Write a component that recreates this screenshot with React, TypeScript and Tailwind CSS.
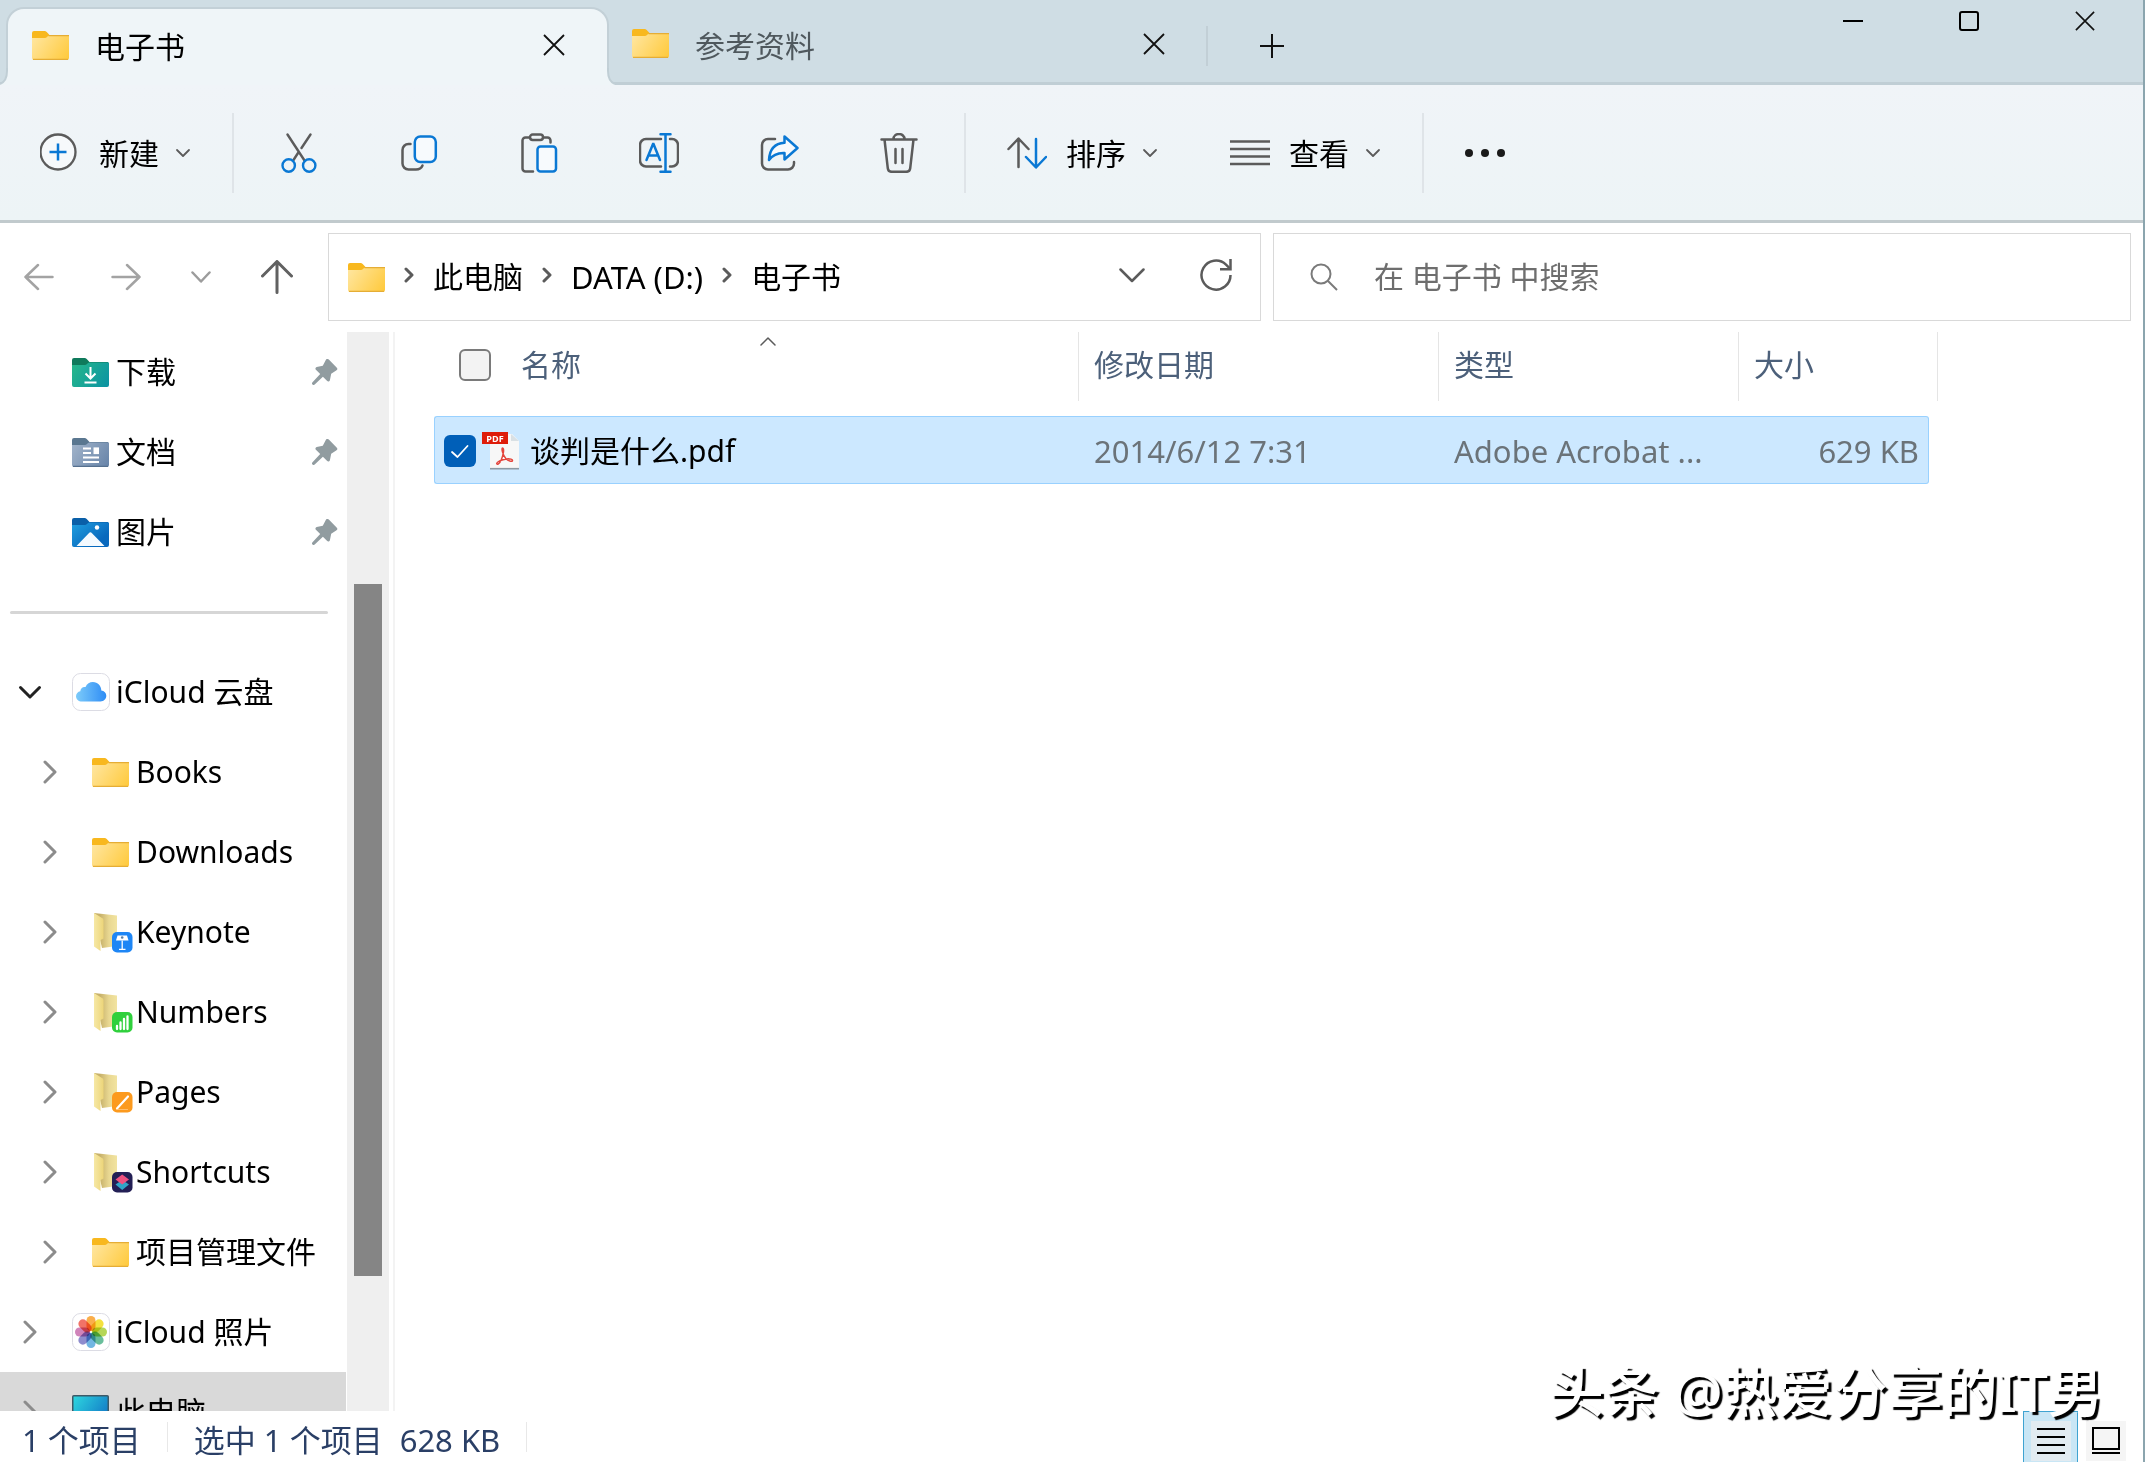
import React from 'react';

const GRAY = '#5b5b5b';
const BLUE = '#0a78d4';

function FolderIcon() {
  return (
    <svg className="w-[37px] h-[29px] shrink-0" viewBox="0 0 37 29" fill="none">
      <defs>
        <linearGradient id="folder" x1="0" y1="4" x2="37" y2="29" gradientUnits="userSpaceOnUse">
          <stop stopColor="#ffe7a3" />
          <stop offset="1" stopColor="#ffc93a" />
        </linearGradient>
      </defs>
      <path d="M0 2a2 2 0 0 1 2-2h10.500a3 3 0 0 1 2.200 1L17.500 4H36v4H0z" fill="#f8b81e" />
      <path d="M0 7h12c1.500 0 2.500-.5 3.500-1.500L17 4.500h20V27a2 2 0 0 1-2 2H2a2 2 0 0 1-2-2z" fill="url(#folder)" />
      <path d="M16.500 4.600H37M1 28.300h35" stroke="#e5ad35" strokeWidth="1.200" />
    </svg>
  );
}

function DownloadsIcon() {
  return (
    <svg className="w-[37px] h-[29px]" viewBox="0 0 37 29" fill="none">
      <defs>
        <linearGradient id="downloads" x1="0" y1="4" x2="37" y2="29" gradientUnits="userSpaceOnUse">
          <stop stopColor="#27b98a" />
          <stop offset="1" stopColor="#0b92a3" />
        </linearGradient>
      </defs>
      <path d="M0 2a2 2 0 0 1 2-2h10.500a3 3 0 0 1 2.200 1L17.500 4H36v4H0z" fill="#0f7a5c" />
      <path d="M0 7h12c1.500 0 2.500-.5 3.500-1.500L17 4.500h20V27a2 2 0 0 1-2 2H2a2 2 0 0 1-2-2z" fill="url(#downloads)" />
      <path d="M18.500 9v11M13.500 15.500l5 5 5-5M12.500 24.500h12" stroke="#fff" strokeWidth="2" />
    </svg>
  );
}

function DocumentsIcon() {
  return (
    <svg className="w-[37px] h-[29px]" viewBox="0 0 37 29" fill="none">
      <defs>
        <linearGradient id="documents" x1="0" y1="4" x2="37" y2="29" gradientUnits="userSpaceOnUse">
          <stop stopColor="#a3b5cb" />
          <stop offset="1" stopColor="#6683a8" />
        </linearGradient>
      </defs>
      <path d="M0 2a2 2 0 0 1 2-2h10.500a3 3 0 0 1 2.200 1L17.500 4H36v4H0z" fill="#5a7790" />
      <path d="M0 7h12c1.500 0 2.500-.5 3.500-1.500L17 4.500h20V27a2 2 0 0 1-2 2H2a2 2 0 0 1-2-2z" fill="url(#documents)" />
      <path d="M11 10.500h8M11 15h8M11 19.500h16M11 24h16" stroke="#fff" strokeWidth="2.200" />
      <path d="M21.500 9.400h5.500v6.700h-5.500z" fill="#fff" />
      <path d="M1 28.400h35" stroke="#55708f" strokeWidth="1.200" />
    </svg>
  );
}

function PicturesIcon() {
  return (
    <svg className="w-[37px] h-[29px]" viewBox="0 0 37 29" fill="none">
      <defs>
        <linearGradient id="pictures" x1="0" y1="4" x2="20" y2="29" gradientUnits="userSpaceOnUse">
          <stop stopColor="#20a0e0" />
          <stop offset="1" stopColor="#0868bd" />
        </linearGradient>
      </defs>
      <path d="M0 2a2 2 0 0 1 2-2h10.500a3 3 0 0 1 2.200 1L17.500 4H36v4H0z" fill="#0a5fa8" />
      <path d="M0 7h12c1.500 0 2.500-.5 3.500-1.500L17 4.500h20V27a2 2 0 0 1-2 2H2a2 2 0 0 1-2-2z" fill="url(#pictures)" />
      <path d="M4.500 28 16.800 15.200a2.200 2.200 0 0 1 3.200 0L32.500 28z" fill="#f4faff" />
      <circle cx="25" cy="9.500" r="2.200" fill="#fff" />
    </svg>
  );
}

function CloudIcon() {
  return (
    <svg className="w-[38px] h-[38px]" viewBox="0 0 38 38" fill="none">
      <defs>
        <linearGradient id="cloud" x1="4" y1="20" x2="34" y2="20" gradientUnits="userSpaceOnUse">
          <stop stopColor="#7ccbfa" />
          <stop offset="1" stopColor="#2f8df5" />
        </linearGradient>
      </defs>
      <rect x=".5" y=".5" width="37" height="37" rx="8" fill="#fff" stroke="#dcdce4" />
      <path d="M10 28.500c-3.500 0-6-2.300-6-5.300 0-2.700 1.900-4.600 4.300-5 .2-3 2.500-4.800 5.200-4.200C14.900 10.800 17.700 9 20.900 9c4.800 0 8.400 3.700 8.400 8.500 2.900.4 5 2.500 5 5.300 0 3.200-2.500 5.700-5.800 5.700z" fill="url(#cloud)" />
    </svg>
  );
}

const petals = ['#f9a02b', '#f2dc1c', '#a8cf3a', '#4fb38a', '#58a9dd', '#7a78c4', '#c86fae', '#ef5b4c'];

function PhotosIcon() {
  return (
    <svg className="w-[38px] h-[38px]" viewBox="0 0 38 38" fill="none">
      <rect x=".5" y=".5" width="37" height="37" rx="8" fill="#fff" stroke="#dcdce4" />
      {petals.map((color, i) => (
        <rect key={color} x="14.500" y="3" width="9" height="15" rx="4.500" fill={color} fillOpacity=".85"
          style={{ mixBlendMode: 'multiply' }} transform={`rotate(${i * 45} 19 19)`} />
      ))}
    </svg>
  );
}

function PcIcon() {
  return (
    <svg className="w-[37px] h-[34px]" viewBox="0 0 37 34" fill="none">
      <defs>
        <linearGradient id="pc" x1="0" y1="0" x2="37" y2="26" gradientUnits="userSpaceOnUse">
          <stop stopColor="#2fdbe0" />
          <stop offset="1" stopColor="#0f6fc4" />
        </linearGradient>
      </defs>
      <rect x=".75" y=".75" width="35.500" height="26" rx="1" fill="url(#pc)" stroke="#3d5a68" strokeWidth="1.500" />
      <path d="M14 27h9v4h4v2H10v-2h4z" fill="#8a979e" />
    </svg>
  );
}

function AppFolderIcon({ children }: { children: React.ReactNode }) {
  return (
    <svg className="w-[41px] h-[41px] shrink-0" viewBox="0 0 41 41" fill="none">
      <defs>
        <linearGradient id="flap" x1="0" y1="0" x2="12" y2="0" gradientUnits="userSpaceOnUse">
          <stop stopColor="#f8ecae" />
          <stop offset="1" stopColor="#ecd477" />
        </linearGradient>
        <linearGradient id="inside" x1="8" y1="0" x2="26" y2="0" gradientUnits="userSpaceOnUse">
          <stop stopColor="#c7b16a" />
          <stop offset=".5" stopColor="#e9d892" />
          <stop offset="1" stopColor="#f3e5a2" />
        </linearGradient>
      </defs>
      <path d="M2 1 25 3.500V34l-15 2z" fill="url(#inside)" />
      <path d="M2 1 10 6c1.300.8 1.500 1.500 1.500 3v17.500L8.500 28v11L2 34.500z" fill="url(#flap)" />
      {children}
    </svg>
  );
}

function KeynoteIcon() {
  return (
    <AppFolderIcon>
      <rect x="20" y="20" width="20.500" height="20.500" rx="5" fill="#1e86f5" />
      <path d="M25.500 23.500h9.500l1.500 5H24z" fill="#fff" />
      <circle cx="30.200" cy="25.500" r="1.300" fill="#5a7fa5" />
      <path d="M30.200 28.500v8.500M27 37.300h6.500" stroke="#fff" strokeWidth="1.300" />
    </AppFolderIcon>
  );
}

function NumbersIcon() {
  return (
    <AppFolderIcon>
      <rect x="20" y="20" width="20.500" height="20.500" rx="5" fill="#2fd03c" />
      <path d="M25 37v-3M28.500 37v-6.500M32 37V27M35.500 37V24.500" stroke="#fff" strokeWidth="2.300" strokeLinecap="round" />
    </AppFolderIcon>
  );
}

function PagesIcon() {
  return (
    <AppFolderIcon>
      <rect x="20" y="20" width="20.500" height="20.500" rx="5" fill="#fc9a1e" />
      <path d="m25 36.500 11-12" stroke="#fff" strokeWidth="2.200" strokeLinecap="round" />
      <path d="M24 37.500h12" stroke="#ffc77f" strokeWidth=".8" />
    </AppFolderIcon>
  );
}

function ShortcutsIcon() {
  return (
    <AppFolderIcon>
      <rect x="20" y="20" width="20.500" height="20.500" rx="5" fill="#231f55" />
      <path d="m23.500 32.500 6.700-4.500 6.800 4.500-6.800 5.500z" fill="#2fa6c8" />
      <path d="m23.500 27.500 6.700-5 6.800 5-6.800 5z" fill="#ee5180" />
    </AppFolderIcon>
  );
}

function PinIcon() {
  return (
    <svg className="w-[26px] h-[26px]" viewBox="0 0 26 26" fill="#919ca0">
      <path d="M13.800.9a2 2 0 0 1 3-.3l7.800 7.800a2 2 0 0 1-.4 3.100l-5 3.200-1.300 6.600a1.600 1.600 0 0 1-2.700.8l-4.300-4.300L2.700 25.500a1.500 1.500 0 0 1-2.200-2.200L8.200 15 3.900 10.800a1.600 1.600 0 0 1 .8-2.700l6.100-1.400z" />
    </svg>
  );
}

function PdfIcon() {
  return (
    <svg className="w-[37px] h-[38px] shrink-0" viewBox="0 0 37 38" fill="none">
      <path d="M8 2h22l7 7v28H8z" fill="#f7f7f7" />
      <path d="M29 2v7h8z" fill="#d9e0e4" />
      <path d="M8 36.700h29" stroke="#8c99a3" strokeWidth="1.600" />
      <path d="M0 0h26v12H0z" fill="#de1c0a" />
      <text x="13" y="9.500" textAnchor="middle" fontSize="9" fontWeight="700" fill="#fff" fontFamily="Open Sans, sans-serif">PDF</text>
      <path d="M20.500 16c2 0 1 7-1.500 12.500-1.500 3.300-4 4.500-4.300 3.200-.4-1.700 5-4.300 10-4.800 3.500-.3 6 .4 5.800 1.700-.3 1.700-4.300.4-6.700-2.200C20.500 22.800 19.300 16 20.500 16z" stroke="#e4453c" strokeWidth="1.500" />
    </svg>
  );
}

function Chevron({ className, d, viewBox, color = GRAY, width = 2.5 }: {
  className: string; d: string; viewBox: string; color?: string; width?: number;
}) {
  return (
    <svg className={className} viewBox={viewBox} fill="none" stroke={color} strokeWidth={width} strokeLinecap="round" strokeLinejoin="round">
      <path d={d} />
    </svg>
  );
}

const SmallDown = () => (
  <Chevron className="w-4 h-4" viewBox="0 0 16 16" d="m2 5 6 6 6-6" width={1.8} />
);

function CloseIcon({ className = 'w-[22px] h-[22px]' }: { className?: string }) {
  return (
    <svg className={className} viewBox="0 0 22 22" stroke="#111" strokeWidth="1.800">
      <path d="m1 1 20 20M21 1 1 21" />
    </svg>
  );
}

const toolIcon = 'w-10 h-10';

const tools = [
  {
    label: '剪切',
    icon: (
      <svg className={toolIcon} viewBox="0 0 40 40" fill="none" strokeWidth="2.400" strokeLinecap="round">
        <path d="M8.500 1.500 25.500 27.500M31.500 1.500 22.500 15M19 20l-4.500 7" stroke={GRAY} />
        <circle cx="9.700" cy="32.500" r="6.200" stroke={BLUE} />
        <circle cx="30.200" cy="32.500" r="6.200" stroke={BLUE} />
      </svg>
    ),
  },
  {
    label: '复制',
    icon: (
      <svg className={toolIcon} viewBox="0 0 40 40" fill="none" strokeWidth="2.500" strokeLinecap="round">
        <path d="M11.500 11H9.500a6 6 0 0 0-6 6v13.500a6 6 0 0 0 6 6H17c3.500 0 5.500-1.500 6.500-4" stroke={GRAY} />
        <rect x="15.800" y="3.500" width="21" height="25.500" rx="5.500" stroke={BLUE} fill="#f7fafd" />
      </svg>
    ),
  },
  {
    label: '粘贴',
    icon: (
      <svg className={toolIcon} viewBox="0 0 40 40" fill="none" strokeWidth="2.500" strokeLinecap="round">
        <path d="M10.500 4.500H6.500A3 3 0 0 0 3.500 7.500v28A3 3 0 0 0 6.500 38.500H14M24.500 4.500h4A3 3 0 0 1 31.500 7.500v2" stroke={GRAY} />
        <rect x="11" y="1.500" width="13" height="5.500" rx="2.700" stroke={GRAY} />
        <rect x="18.500" y="13.500" width="18.500" height="25" rx="3" stroke={BLUE} fill="#f7fafd" />
      </svg>
    ),
  },
  {
    label: '重命名',
    icon: (
      <svg className={toolIcon} viewBox="0 0 40 40" fill="none" strokeWidth="2.500" strokeLinecap="round">
        <path d="M22 6H7a6 6 0 0 0-6 6v15.500a6 6 0 0 0 6 6h15M31 6h2a6 6 0 0 1 6 6v15.500a6 6 0 0 1-6 6h-2" stroke={GRAY} />
        <path d="m7.500 27 6.500-16h.5L21 27M9.500 22.500H19M21.500 1.300h10M21.500 38.700h10M26.500 1.300v37.400" stroke={BLUE} />
      </svg>
    ),
  },
  {
    label: '共享',
    icon: (
      <svg className={toolIcon} viewBox="0 0 40 40" fill="none" strokeWidth="2.500" strokeLinecap="round" strokeLinejoin="round">
        <path d="M16 6H9a6 6 0 0 0-6 6v18.500a6 6 0 0 0 6 6h20a6 6 0 0 0 6-6V29" stroke={GRAY} />
        <path d="M25.500 3.500 38.500 15 25.500 26.500V20c-6.500-.3-11.500 1.500-15.500 7C10.500 17 15.500 10.500 25.500 9.800z" stroke={BLUE} fill="#f7fafd" />
      </svg>
    ),
  },
  {
    label: '删除',
    icon: (
      <svg className={toolIcon} viewBox="0 0 40 40" fill="none" stroke={GRAY} strokeWidth="2.500" strokeLinecap="round" strokeLinejoin="round">
        <path d="M2.500 6.500h35M14.500 6a5.500 5 0 0 1 11 0M5.500 6.500l3.300 28.800a4 4 0 0 0 4 3.500h14.400a4 4 0 0 0 4-3.500l3.300-28.800M16.500 16v14M23.500 16v14" />
      </svg>
    ),
  },
];

function ToolbarDivider() {
  return <div className="w-[2px] h-20 mx-[5px] bg-[#dfe4e8]" />;
}

function MenuButton({ label, icon }: { label: string; icon: React.ReactNode }) {
  return (
    <button className="flex items-center h-20 px-9">
      {icon}
      <span className="ml-[19px] mr-4 pt-[3px]">{label}</span>
      <SmallDown />
    </button>
  );
}

function TabBar() {
  return (
    <div className="flex items-end h-[85px] bg-[#cfdde4]">
      <div className="w-[6px] h-full border-b-[3px] border-[#c0ced5]" />
      <div className="relative flex items-center w-[603px] h-[78px] pl-6 pr-[42px] pb-1 bg-[#eff5f8] border-2 border-b-0 border-[#c3d0d7] rounded-t-[18px]">
        <svg className="absolute -left-2 bottom-0 w-[9px] h-[17px]" viewBox="0 0 9 17" fill="none">
          <path d="M9 0H7v3C7 9 5 14 0 16v1h9z" fill="#eff5f8" />
          <path d="M7 0v3C7 9 5 14 0 16" stroke="#c0ced5" strokeWidth="2" />
        </svg>
        <svg className="absolute -right-2 bottom-0 w-[9px] h-[17px]" viewBox="0 0 9 17" fill="none">
          <path d="M0 0h2v3c0 6 2 11 7 13v1H0z" fill="#eff5f8" />
          <path d="M2 0v3c0 6 2 11 7 13" stroke="#c0ced5" strokeWidth="2" />
        </svg>
        <FolderIcon />
        <button className="flex-1 ml-[26px] pt-1 text-left">电子书</button>
        <button aria-label="关闭标签页"><CloseIcon /></button>
      </div>
      <div className="flex flex-1 items-center h-full pt-[9px] border-b-[3px] border-[#c0ced5]">
        <div className="flex items-center w-[597px] pl-[23px] pr-[41px] pb-1">
          <FolderIcon />
          <button className="flex-1 ml-[26px] pt-1 text-left text-[#4f585d]">参考资料</button>
          <button aria-label="关闭标签页"><CloseIcon /></button>
        </div>
        <div className="w-[2px] h-10 bg-[#c2cfd6]" />
        <button className="ml-[52px]" aria-label="新建标签页">
          <svg className="w-6 h-6" viewBox="0 0 24 24" stroke="#111" strokeWidth="2">
            <path d="M12 0v24M0 12h24" />
          </svg>
        </button>
        <div className="flex self-start -mt-[9px] ml-auto">
          <button className="flex items-center justify-center w-[116px] h-[42px]" aria-label="最小化">
            <svg className="w-5 h-5" viewBox="0 0 20 20" stroke="#000" strokeWidth="2"><path d="M0 10h20" /></svg>
          </button>
          <button className="flex items-center justify-center w-[116px] h-[42px]" aria-label="最大化">
            <svg className="w-5 h-5" viewBox="0 0 20 20" fill="none" stroke="#000" strokeWidth="2"><rect x="1" y="1" width="18" height="18" rx="2" /></svg>
          </button>
          <button className="flex items-center justify-center w-[116px] h-[42px]" aria-label="关闭">
            <CloseIcon className="w-5 h-5" />
          </button>
        </div>
      </div>
    </div>
  );
}

function Toolbar() {
  return (
    <div className="flex items-center h-[138px] pl-1 bg-linear-to-b from-[#f0f4f8] to-[#edf4f6] border-b-[3px] border-[#c1cacd]">
      <MenuButton
        label="新建"
        icon={
          <svg className={toolIcon} viewBox="0 0 40 40" fill="none" strokeWidth="2.300">
            <circle cx="18" cy="19" r="17.500" stroke={GRAY} fill="#f6f9fb" />
            <path d="M18 10.500v17M9.500 19h17" stroke={BLUE} strokeWidth="2.500" />
          </svg>
        }
      />
      <ToolbarDivider />
      {tools.map((tool) => (
        <button key={tool.label} className="flex items-center justify-center w-[120px] h-20" aria-label={tool.label}>
          {tool.icon}
        </button>
      ))}
      <ToolbarDivider />
      <MenuButton
        label="排序"
        icon={
          <svg className={toolIcon} viewBox="0 0 40 40" fill="none" strokeWidth="2.500" strokeLinecap="round" strokeLinejoin="round">
            <path d="M11.500 34V6M1.500 16l10-10.500L21.500 16" stroke={GRAY} />
            <path d="M29 6v28M19 24l10 10.500L39 24" stroke={BLUE} />
          </svg>
        }
      />
      <MenuButton
        label="查看"
        icon={
          <svg className={toolIcon} viewBox="0 0 40 40" stroke={GRAY} strokeWidth="2.500">
            <path d="M0 8.500h40M0 16h40M0 23.500h40M0 31h40" />
          </svg>
        }
      />
      <ToolbarDivider />
      <button className="h-20 px-9" aria-label="更多">
        <svg className={toolIcon} viewBox="0 0 40 40" fill="#1a1a1a">
          <circle cx="4" cy="20" r="4" />
          <circle cx="20" cy="20" r="4" />
          <circle cx="36" cy="20" r="4" />
        </svg>
      </button>
    </div>
  );
}

function Crumb() {
  return <Chevron className="w-[10px] h-4 mb-1" viewBox="0 0 10 16" d="m2 2 6 6-6 6" width={3} />;
}

function NavBar() {
  return (
    <div className="flex items-center h-[109px] pr-3 pb-px">
      <div className="flex items-center w-[328px] pl-6 shrink-0">
        <button aria-label="后退">
          <Chevron className="w-[30px] h-[34px]" viewBox="0 0 30 34" d="M28.500 17h-27M14 5 1.500 17 14 29" color="#a3a3a3" />
        </button>
        <button className="ml-[57px]" aria-label="前进">
          <Chevron className="w-[30px] h-[34px]" viewBox="0 0 30 34" d="M1.500 17h27M16 5l12.500 12L16 29" color="#a3a3a3" />
        </button>
        <button className="ml-[50px]" aria-label="最近的位置">
          <Chevron className="w-5 h-5" viewBox="0 0 20 20" d="m1.500 5.500 8.500 9 8.500-9" color="#9c9c9c" />
        </button>
        <button className="ml-[50px]" aria-label="上移">
          <Chevron className="w-8 h-[34px]" viewBox="0 0 32 34" d="M16 32.500v-31M1.500 16 16 1.500 30.500 16" color="#616161" width={3} />
        </button>
      </div>
      <div className="flex flex-[885] items-center h-[88px] pl-[19px] pr-7 gap-[19px] border border-[#d9d9d9] text-[31px]">
        <FolderIcon />
        <Crumb />
        <a href="#pc" className="text-[30px]">此电脑</a>
        <Crumb />
        <a href="#data">DATA (D:)</a>
        <Crumb />
        <a href="#books" className="text-[30px]">电子书</a>
        <button className="ml-auto" aria-label="展开地址">
          <Chevron className="w-[26px] h-[26px]" viewBox="0 0 26 26" d="m1.500 5.500 11.500 11.500L24.500 5.500" />
        </button>
        <button className="ml-9" aria-label="刷新">
          <svg className="w-8 h-8 mb-1" viewBox="0 0 32 32" fill="none" stroke={GRAY} strokeWidth="2.500">
            <path d="M30.500 16A14.500 14.500 0 1 1 26 5.600l4 4" />
            <path d="M30.500 0v10.300H20" />
          </svg>
        </button>
      </div>
      <label className="flex flex-[821] items-center h-[88px] ml-3 pl-9 border border-[#d9d9d9]">
        <svg className="w-7 h-7 shrink-0" viewBox="0 0 28 28" fill="none" stroke="#7a7a7a" strokeWidth="2">
          <circle cx="11" cy="11" r="9.500" />
          <path d="m18 18 9 9" />
        </svg>
        <input
          type="search"
          aria-label="搜索"
          placeholder="在 电子书 中搜索"
          className="flex-1 ml-9 outline-none placeholder:text-[#6e6e6e] placeholder:opacity-100"
        />
      </label>
    </div>
  );
}

const quickAccess = [
  { name: '下载', icon: <DownloadsIcon /> },
  { name: '文档', icon: <DocumentsIcon /> },
  { name: '图片', icon: <PicturesIcon /> },
];

const cloudFolders = [
  { name: 'Books', icon: <FolderIcon /> },
  { name: 'Downloads', icon: <FolderIcon /> },
  { name: 'Keynote', icon: <KeynoteIcon /> },
  { name: 'Numbers', icon: <NumbersIcon /> },
  { name: 'Pages', icon: <PagesIcon /> },
  { name: 'Shortcuts', icon: <ShortcutsIcon /> },
  { name: '项目管理文件', icon: <FolderIcon /> },
];

function TreeItem({ name, icon, arrow, child, pinned, selected }: {
  name: string; icon: React.ReactNode; arrow?: 'down' | 'right'; child?: boolean; pinned?: boolean; selected?: boolean;
}) {
  return (
    <button className={`flex shrink-0 items-center w-full h-20 pr-2 text-left whitespace-nowrap ${child ? 'pl-[38px]' : 'pl-[18px]'} ${selected ? 'bg-[#d9d9d9]' : ''}`}>
      <span className="w-6 shrink-0">
        {arrow === 'down' && <Chevron className="w-6 h-6" viewBox="0 0 24 24" d="m2.500 7.500 9.500 9.500 9.500-9.500" color="#222" width={3} />}
        {arrow === 'right' && <Chevron className="w-6 h-6" viewBox="0 0 24 24" d="m7 2 10 10L7 22" color="#8c8c8c" width={3} />}
      </span>
      <span className="flex w-[38px] ml-[30px] mr-[6px] shrink-0">{icon}</span>
      <span className="flex-1">{name}</span>
      {pinned && <PinIcon />}
    </button>
  );
}

function Sidebar() {
  return (
    <div className="flex shrink-0 border-r-2 border-[#f3f3f3] pr-1">
      <nav className="flex flex-col w-[347px] pr-px overflow-hidden">
        {quickAccess.map((item) => (
          <TreeItem key={item.name} name={item.name} icon={item.icon} pinned />
        ))}
        <div className="flex items-center h-20 shrink-0 pl-[10px] pr-[18px]">
          <hr className="w-full border-0 h-[3px] rounded-full bg-[#d6d6d6]" />
        </div>
        <TreeItem name="iCloud 云盘" icon={<CloudIcon />} arrow="down" />
        {cloudFolders.map((item) => (
          <TreeItem key={item.name} name={item.name} icon={item.icon} arrow="right" child />
        ))}
        <TreeItem name="iCloud 照片" icon={<PhotosIcon />} arrow="right" />
        <TreeItem name="此电脑" icon={<PcIcon />} arrow="right" selected />
      </nav>
      {/* Scrollbar */}
      <div className="w-[42px] px-[7px] pt-[252px] bg-[#efefef]">
        <div className="h-[692px] bg-[#858585]" />
      </div>
    </div>
  );
}

const headCell = 'relative flex items-center h-[69px] pl-[15px] pb-[3px] border-r border-[#e5e5e5]';

function FileTable() {
  return (
    <main className="flex-1 pl-[39px] overflow-hidden">
      <table className="table-fixed w-[1504px] border-separate border-spacing-0 text-left">
        <colgroup>
          <col className="w-[645px]" />
          <col className="w-[360px]" />
          <col className="w-[300px]" />
          <col className="w-[190px]" />
          <col className="w-[9px]" />
        </colgroup>
        <thead className="text-[#4c607a]">
          <tr>
            <th className="p-0 pb-[15px] font-normal">
              <div className="relative flex items-center h-[69px] pl-[25px] pb-[3px] border-r border-[#e5e5e5]">
                <input type="checkbox" aria-label="全选" className="appearance-none w-8 h-8 mr-[30px] rounded-md border-2 border-[#7a7a7a] bg-[#f3f3f3]" />
                名称
                <Chevron className="absolute left-[326px] top-1 w-4 h-[10px]" viewBox="0 0 16 10" d="m1 9 7-7 7 7" width={1.5} />
              </div>
            </th>
            <th className="p-0 pb-[15px] font-normal"><div className={headCell}>修改日期</div></th>
            <th className="p-0 pb-[15px] font-normal"><div className={headCell}>类型</div></th>
            <th colSpan={2} className="p-0 pb-[15px] font-normal"><div className={headCell}>大小</div></th>
          </tr>
        </thead>
        <tbody>
          <tr className="h-[68px] text-[31px] text-[#6b7379]">
            <td className="p-0 pt-[2px] bg-[#cce8ff] border border-r-0 border-[#99d1ff] rounded-l-[3px]">
              <div className="flex items-center pl-[9px] text-[30px] text-black">
                <span className="relative w-8 h-8">
                  <input id="file" type="checkbox" defaultChecked className="block appearance-none w-8 h-8 rounded-md bg-[#005fb8]" />
                  <Chevron className="absolute inset-0 w-8 h-8 pointer-events-none" viewBox="0 0 32 32" d="m8 17 5.500 5L23.500 11" color="#fff" width={1.8} />
                </span>
                <label htmlFor="file" className="flex items-center ml-[6px] gap-[11px]">
                  <PdfIcon />
                  谈判是什么.pdf
                </label>
              </div>
            </td>
            <td className="p-0 pt-[2px] pl-[15px] bg-[#cce8ff] border-y border-[#99d1ff]">2014/6/12 7:31</td>
            <td className="p-0 pt-[2px] pl-[15px] bg-[#cce8ff] border-y border-[#99d1ff]">Adobe Acrobat ...</td>
            <td className="p-0 pt-[2px] pr-[9px] bg-[#cce8ff] border border-l-0 border-[#99d1ff] rounded-r-[3px] text-right">629 KB</td>
            <td className="p-0" />
          </tr>
        </tbody>
      </table>
    </main>
  );
}

function StatusBar() {
  return (
    <div className="relative flex items-center h-[51px] pl-[22px] pr-[9px] text-[31px] text-[#2a3f66]">
      <span className="mt-1.5">1 个项目</span>
      <div className="w-px h-[30px] mx-[26px] bg-[#e8e8e8]" />
      <span className="mt-1.5">选中 1 个项目</span>
      <span className="mt-1.5 ml-[17px]">628 KB</span>
      <div className="w-px h-[30px] ml-[26px] bg-[#e8e8e8]" />
      <div className="flex ml-auto h-full">
        <button className="flex items-end justify-center w-[55px] h-full pb-px bg-[#c9e6f5] border border-b-0 border-[#3fa3d1]" aria-label="详细信息">
          <span className="flex items-center justify-center w-10 h-10 bg-[#e2ebf1]">
            <svg className="w-7 h-8" viewBox="0 0 28 32" stroke="#000" strokeWidth="2"><path d="M0 4h28M0 12h28M0 20h28M0 28h28" /></svg>
          </span>
        </button>
        <button className="flex items-end justify-center w-[56px] h-full pb-px" aria-label="大图标">
          <span className="flex items-center justify-center w-10 h-10 bg-[#f5f5f5]">
            <svg className="w-7 h-8" viewBox="0 0 28 32" fill="none" stroke="#000" strokeWidth="2"><path d="M1 3h26v21H1zM0 28h28" /></svg>
          </span>
        </button>
      </div>
      <p className="absolute right-10 -top-[60px] text-[55px] font-medium leading-[80px] whitespace-nowrap text-white [text-shadow:3px_3px_1px_#000]">
        头条 @热爱分享的IT男
      </p>
    </div>
  );
}

export default function App() {
  return (
    <div className="flex flex-col h-screen bg-white border-r-2 border-[#8ba5ae] text-[30px] leading-10 text-black font-['Noto_Sans','Noto_Sans_CJK_SC',sans-serif]">
      <TabBar />
      <Toolbar />
      <NavBar />
      <div className="flex flex-1 min-h-0">
        <Sidebar />
        <FileTable />
      </div>
      <StatusBar />
    </div>
  );
}
